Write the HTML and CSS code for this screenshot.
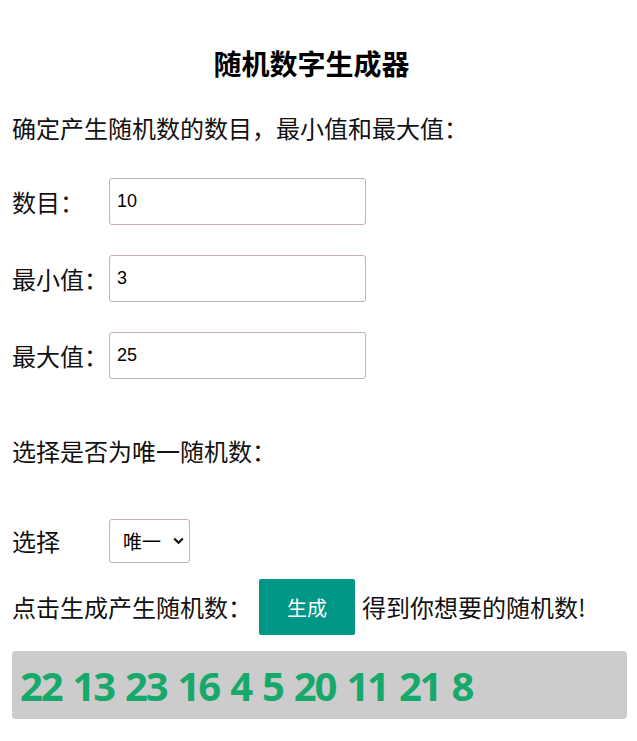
FILE: index.html
```html
<!DOCTYPE html>
<html lang="zh">
<head>
<meta charset="utf-8">
<title>随机数字生成器</title>
<link rel="stylesheet" href="styles.css">
</head>
<body>
<div class="page">
  <h2 class="title">随机数字生成器</h2>
  <p class="intro">确定产生随机数的数目，最小值和最大值：</p>
  <div class="fields">
    <div class="row"><label class="label">数目：</label><input class="field" type="text" value="10"></div>
    <div class="row"><label class="label">最小值：</label><input class="field" type="text" value="3"></div>
    <div class="row"><label class="label">最大值：</label><input class="field" type="text" value="25"></div>
  </div>
  <p class="intro unique">选择是否为唯一随机数：</p>
  <div class="row select-row">
    <label class="label">选择</label>
    <div class="select">
      <span class="select-text">唯一</span>
      <svg class="chev" width="11" height="8" viewBox="0 0 11 8"><path d="M1.2 1.5 L5.5 5.8 L9.8 1.5" fill="none" stroke="#111" stroke-width="2.2"/></svg>
    </div>
  </div>
  <div class="gen-row">
    <span class="gen-text">点击生成产生随机数：</span>
    <button class="btn" type="button">生成</button>
    <span class="gen-text">得到你想要的随机数!</span>
  </div>
  <div class="result">22 13 23 16 4 5 20 11 21 8</div>
</div>
</body>
</html>
```
FILE: styles.css
```css
html, body {
  margin: 0;
  padding: 0;
  background: #fff;
}
body {
  font-family: "Noto Sans CJK SC", "Noto Sans", sans-serif;
  color: #111;
}
.page {
  padding: 0 10px 0 12px;
}
.title {
  margin: 43px 0 0;
  padding-right: 16px;
  font-size: 28px;
  line-height: 40px;
  font-weight: 700;
  text-align: center;
  color: #000;
}
.intro {
  margin: 29px 0 0;
  font-size: 24px;
  line-height: 32px;
}
.fields {
  margin-top: 34px;
  display: flex;
  flex-direction: column;
  gap: 30px;
}
.row {
  display: flex;
  align-items: center;
}
.label {
  width: 97px;
  flex: none;
  font-size: 24px;
  line-height: 32px;
}
.field {
  box-sizing: border-box;
  width: 257px;
  height: 47px;
  margin: 0;
  padding: 0 7px;
  border: 1px solid #c2b2aa;
  border-radius: 3px;
  font-family: "Liberation Sans", Arial, sans-serif;
  font-size: 18px;
  color: #000;
  background: #fff;
}
.unique {
  margin-top: 56px;
}
.select-row {
  margin-top: 52px;
}
.select {
  box-sizing: border-box;
  width: 81px;
  height: 44px;
  border: 1px solid #c2b2aa;
  border-radius: 3px;
  display: flex;
  align-items: center;
  padding: 0 4px 0 13px;
  gap: 12px;
}
.select-text {
  font-size: 19px;
  line-height: 24px;
  color: #000;
}
.chev {
  display: block;
}
.gen-row {
  margin-top: 16px;
  display: flex;
  align-items: center;
  gap: 7px;
}
.gen-text {
  font-size: 24px;
  line-height: 32px;
}
.btn {
  width: 96px;
  height: 56px;
  margin: 0;
  border: none;
  border-radius: 2px;
  background: #009688;
  color: #fff;
  font-family: "Noto Sans CJK SC", sans-serif;
  font-size: 20px;
  padding: 0;
}
.result {
  margin-top: 16px;
  height: 68px;
  box-sizing: border-box;
  padding: 0 8px;
  background: #cccccc;
  border-radius: 4px;
  display: flex;
  align-items: center;
  font-family: "Open Sans", sans-serif;
  font-weight: 700;
  font-size: 40px;
  letter-spacing: -2.2px;
  word-spacing: 3px;
  color: #17a86b;
}
```
